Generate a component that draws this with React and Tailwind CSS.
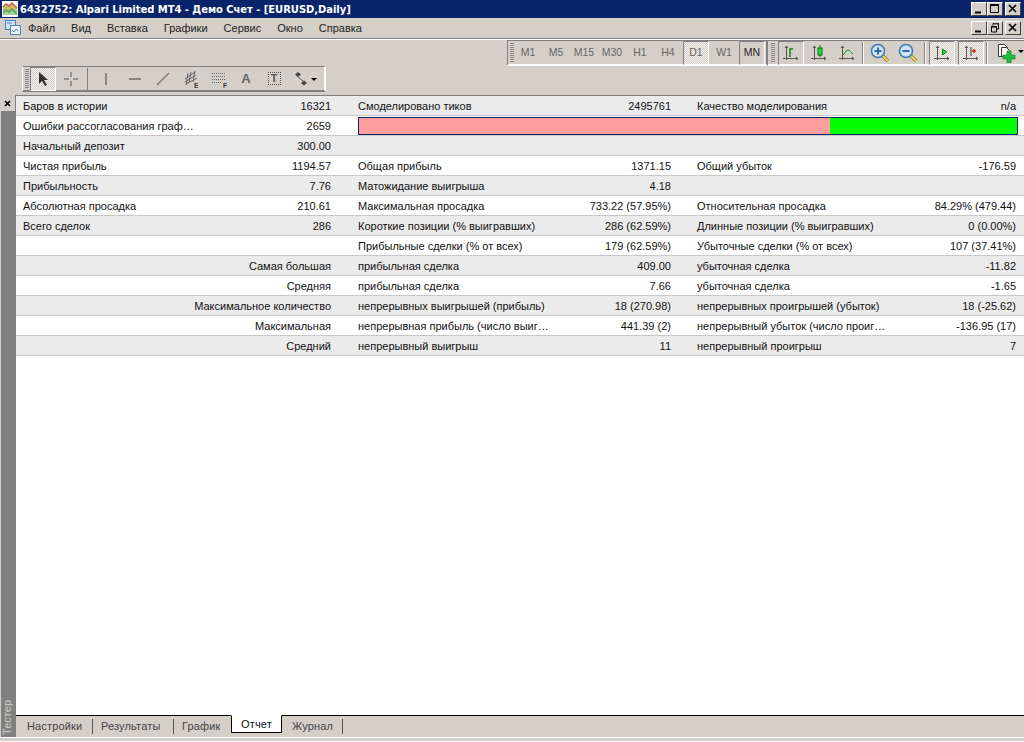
import React from "react";

const rows = [
  ["Баров в истории", "16321", "Смоделировано тиков", "2495761", "Качество моделирования", "n/a"],
  ["Ошибки рассогласования граф…", "2659", null],
  ["Начальный депозит", "300.00", "", "", "", ""],
  ["Чистая прибыль", "1194.57", "Общая прибыль", "1371.15", "Общий убыток", "-176.59"],
  ["Прибыльность", "7.76", "Матожидание выигрыша", "4.18", "", ""],
  ["Абсолютная просадка", "210.61", "Максимальная просадка", "733.22 (57.95%)", "Относительная просадка", "84.29% (479.44)"],
  ["Всего сделок", "286", "Короткие позиции (% выигравших)", "286 (62.59%)", "Длинные позиции (% выигравших)", "0 (0.00%)"],
  ["", "", "Прибыльные сделки (% от всех)", "179 (62.59%)", "Убыточные сделки (% от всех)", "107 (37.41%)"],
  ["", "Самая большая", "прибыльная сделка", "409.00", "убыточная сделка", "-11.82"],
  ["", "Средняя", "прибыльная сделка", "7.66", "убыточная сделка", "-1.65"],
  ["", "Максимальное количество", "непрерывных выигрышей (прибыль)", "18 (270.98)", "непрерывных проигрышей (убыток)", "18 (-25.62)"],
  ["", "Максимальная", "непрерывная прибыль (число выиг…", "441.39 (2)", "непрерывный убыток (число проиг…", "-136.95 (17)"],
  ["", "Средний", "непрерывный выигрыш", "11", "непрерывный проигрыш", "7"],
];

const Chart = ({ children }) => (
  <svg width="18" height="18" viewBox="0 0 18 18" fill="none">
    <path d="M4.500 2v14M1 14.500h15" stroke="#555" strokeWidth="1" />
    <path d="M3 4l1.500-2 1.500 2M14 13l2 1.500-2 1.500" stroke="#555" strokeWidth="1" />
    {children}
  </svg>
);

const Btn = ({ children, active, hatch, w = "w-[26px]" }) => (
  <div
    className={`${w} h-[24px] flex items-center justify-center shrink-0 border ${
      active ? "border-t-[#808080] border-l-[#808080] border-r-white border-b-white" : "border-transparent"
    } ${hatch ? "bg-[repeating-conic-gradient(#d4d0c8_0_25%,#f4f3f0_0_50%)] bg-[length:2px_2px]" : ""}`}
  >
    {children}
  </div>
);

const Gap = ({ className }) => <div className={`shrink-0 ${className}`} />;

const Grip = () => (
  <div className="w-[4px] h-[20px] ml-[1px] shrink-0 bg-[repeating-linear-gradient(to_bottom,#8a8a8a_0,#8a8a8a_1px,transparent_1px,transparent_2px)]" />
);
const Sep = ({ className }) => <div className={`w-[2px] h-[22px] bg-[#808080] border-r border-white shrink-0 ${className}`} />;

const TF = ({ t, active, hatch }) => (
  <Btn active={active} hatch={hatch} w="w-[26px] mx-[1px]">
    <span className={`text-[10.5px] ${active && !hatch ? "text-[#222]" : "text-[#666]"}`}>{t}</span>
  </Btn>
);

const Magnifier = ({ plus }) => (
  <svg width="20" height="20" viewBox="0 0 20 20" fill="none">
    <path d="M12 12l6 6" stroke="#8a7a20" strokeWidth="3.500" />
    <path d="M12 12l6 6" stroke="#f0d860" strokeWidth="1.800" />
    <circle cx="8" cy="8" r="6.500" fill="#cfe4f6" stroke="#3d79b8" strokeWidth="1.500" />
    <path d={plus ? "M4.500 8h7M8 4.500v7" : "M4.500 8h7"} stroke="#2f6aa8" strokeWidth="2" />
  </svg>
);

const WinBtn = ({ children }) => (
  <div className="w-[16px] h-[14px] bg-[#d4d0c8] border border-t-white border-l-white border-r-[#404040] border-b-[#404040] flex items-center justify-center shrink-0">
    {children}
  </div>
);
const Min = () => <svg width="10" height="10" viewBox="0 0 10 10"><path d="M1 7.500h6v2H1z" fill="#000" /></svg>;
const Max = () => <svg width="10" height="10" viewBox="0 0 10 10" fill="none"><path d="M0.500 1h8v7.500h-8z" stroke="#000" /><path d="M0 1h9" stroke="#000" strokeWidth="2" /></svg>;
const Rest = () => <svg width="10" height="10" viewBox="0 0 10 10" fill="none"><path d="M3 .8h6M3 .5v2M8.500 .5v5.500H7" stroke="#000" /><path d="M1 3.800h6" stroke="#000" strokeWidth="1.500" /><path d="M1.500 3.500v5.500h5v-5.500" stroke="#000" /></svg>;
const Cls = () => <svg width="10" height="10" viewBox="0 0 10 10"><path d="M1 1l7 7M8 1l-7 7" stroke="#000" strokeWidth="1.600" /></svg>;

const AppIcon = () => (
  <svg width="16" height="16" viewBox="0 0 16 16" className="shrink-0">
    <rect width="16" height="16" fill="#fff" />
    <path d="M1 6l3-3 3 2 3-3 5 5v7H1z" fill="#9fd09f" />
    <path d="M1 6l3-3 3 2 3-3 5 5" stroke="#d85a3a" strokeWidth="1.500" fill="none" />
    <path d="M1 9l3-3 3 2 3-3 5 5" stroke="#e4b040" strokeWidth="1.500" fill="none" />
    <path d="M1 12l3-3 3 2 3-3 5 5" stroke="#50a850" strokeWidth="1.500" fill="none" />
  </svg>
);
const MenuIcon = () => (
  <svg width="16" height="16" viewBox="0 0 16 16" className="shrink-0" fill="none">
    <rect x="0.500" y="0.500" width="10" height="9" fill="#cfe2f5" stroke="#4a82c0" />
    <rect x="5.500" y="5.500" width="10" height="9" fill="#eef5fc" stroke="#4a82c0" />
    <path d="M7 10l2 2 2-3 2 2" stroke="#4a82c0" />
    <path d="M2 3h5" stroke="#4a82c0" />
  </svg>
);

export default function App() {
  return (
    <div className="w-[1024px] h-[742px] overflow-hidden bg-[#d4d0c8] flex flex-col text-[11px] text-[#111] font-['Liberation_Sans',sans-serif]">
      <div className="h-[18px] bg-[#0a246a] flex items-center pl-[2px] pr-[3px] shrink-0">
        <AppIcon />
        <span className="ml-[2px] text-white font-bold text-[10px] tracking-[-0.05px] font-['DejaVu_Sans',sans-serif] whitespace-nowrap">
          6432752: Alpari Limited MT4 - Демо Счет - [EURUSD,Daily]
        </span>
        <div className="ml-auto flex">
          <WinBtn><Min /></WinBtn>
          <WinBtn><Max /></WinBtn>
          <div className="w-[2px]" />
          <WinBtn><Cls /></WinBtn>
        </div>
      </div>

      <div className="h-[21px] flex items-center pl-[5px] pr-[3px] border-b border-[#808080] shrink-0 relative">
        <MenuIcon />
        <div className="flex ml-[7px] gap-[16px] text-[11px] text-[#222]">
          {["Файл", "Вид", "Вставка", "Графики", "Сервис", "Окно", "Справка"].map((m) => (
            <span key={m}>{m}</span>
          ))}
        </div>
        <div className="ml-auto flex">
          <WinBtn><Min /></WinBtn>
          <WinBtn><Rest /></WinBtn>
          <div className="w-[2px]" />
          <WinBtn><Cls /></WinBtn>
        </div>
      </div>

      <div className="h-[27px] flex items-center justify-end shrink-0 border-t border-white">
        <div className="w-[261px] h-[26px] flex items-center border-t border-[#808080] border-b-2 border-b-white border-l border-l-[#808080] border-r-2 border-r-[#808080] pl-[1px]">
          <Grip />
          {["M1", "M5", "M15", "M30", "H1", "H4"].map((t) => <TF key={t} t={t} />)}
          <TF t="D1" active hatch />
          <TF t="W1" />
          <TF t="MN" active />
        </div>
        <div className="w-[256px] h-[26px] flex items-center border-t border-[#808080] border-b-2 border-b-white pl-[2px]">
          <Grip />
          <Gap className="w-[3px]" />
          <Btn active><Chart><path d="M8 13V5h3" stroke="#0a8a0a" strokeWidth="1.500" /></Chart></Btn>
          <Gap className="w-[2px]" />
          <Btn><Chart><rect x="8" y="4" width="4" height="7" fill="#22dd44" stroke="#0a6a0a" /><path d="M10 1v3M10 11v2" stroke="#0a6a0a" /></Chart></Btn>
          <Gap className="w-[2px]" />
          <Btn><Chart><path d="M5 11c2-2 3-5 5-5s3 3 5 4" stroke="#0a8a0a" /></Chart></Btn>
          <Sep className="ml-[2px] mr-[3px]" />
          <Btn><Magnifier plus /></Btn>
          <Gap className="w-[2px]" />
          <Btn><Magnifier /></Btn>
          <Sep className="ml-[3px] mr-[3px]" />
          <Btn active hatch><Chart><path d="M9.500 5v6l4-3z" fill="#22dd44" stroke="#0a8a0a" /></Chart></Btn>
          <Gap className="w-[3px]" />
          <Btn active hatch><Chart><path d="M9 3v9" stroke="#333" /><path d="M10 7h4M12 5v4" stroke="#d03010" strokeWidth="1.500" /></Chart></Btn>
          <Sep className="ml-[2px] mr-[9px]" />
          <svg width="30" height="20" viewBox="0 0 30 20" fill="none" className="shrink-0">
            <path d="M1.500 1.500h6l3 3v9h-9z" fill="#fff" stroke="#333" />
            <path d="M4.500 4.500h5l3 3v6h-8z" fill="#fff" stroke="#333" />
            <path d="M10 8h4v4h4v4h-4v4h-4v-4H6v-4h4z" fill="#22c03a" stroke="#0a7a1a" strokeWidth="0.600" />
            <path d="M21 7h6l-3 3z" fill="#000" />
          </svg>
        </div>
      </div>

      <div className="h-[26px] flex items-center pl-[22px] shrink-0">
        <div className="w-[304px] h-[26px] flex items-center border-t border-[#808080] border-b-2 border-b-[#808080] border-l border-l-white border-r-2 border-r-white pl-[1px]">
          <Grip />
          <Gap className="w-[1px]" />
          <Btn active hatch>
            <svg width="14" height="16" viewBox="0 0 14 16"><path d="M3 1v12l3-3 3 5 2-1-3-5h4z" fill="#333" /></svg>
          </Btn>
          <Gap className="w-[2px]" />
          <Btn>
            <svg width="16" height="16" viewBox="0 0 16 16"><path d="M8 1v5M8 10v5M1 8h5M10 8h5" stroke="#555" /></svg>
          </Btn>
          <Gap className="w-[3px]" />
          <div className="w-[1px] h-[22px] bg-[#808080] shrink-0" />
          <Gap className="w-[5px]" />
          <Btn><svg width="14" height="14" viewBox="0 0 14 14"><path d="M7 1v12" stroke="#555" strokeWidth="1.200" /></svg></Btn>
          <Gap className="w-[3px]" />
          <Btn><svg width="14" height="14" viewBox="0 0 14 14"><path d="M1 7h12" stroke="#555" strokeWidth="1.200" /></svg></Btn>
          <Gap className="w-[2px]" />
          <Btn><svg width="14" height="14" viewBox="0 0 14 14"><path d="M1 13L13 1" stroke="#777" strokeWidth="1.200" /></svg></Btn>
          <Gap className="w-[1px]" />
          <Btn>
            <svg width="18" height="18" viewBox="-2 0 18 18" fill="none">
              <path d="M2 9L12 2M2 12L13 5M3 14L14 8M5 3l-2 12M8 2L6 13M12 1l-2 11" stroke="#666" />
              <text x="11" y="17.500" fontSize="6.500" fontWeight="bold" fill="#333" fontFamily="Liberation Sans">E</text>
            </svg>
          </Btn>
          <Gap className="w-[2px]" />
          <Btn>
            <svg width="18" height="18" viewBox="-2 0 18 18" fill="none">
              <path d="M1 3.500h14M1 6.500h14M1 9.500h14M1 12.500h10" stroke="#666" strokeDasharray="1 1" />
              <text x="12" y="17.500" fontSize="6.500" fontWeight="bold" fill="#333" fontFamily="Liberation Sans">F</text>
            </svg>
          </Btn>
          <Gap className="w-[2px]" />
          <Btn><span className="text-[13px] font-bold text-[#666]">A</span></Btn>
          <Gap className="w-[2px]" />
          <Btn>
            <div className="w-[13px] h-[13px] border border-dotted border-[#555] flex items-center justify-center text-[11px] font-bold text-[#555] leading-none">T</div>
          </Btn>
          <Gap className="w-[6px]" />
          <svg width="26" height="16" viewBox="0 0 26 16" fill="none" className="shrink-0">
            <path d="M2 3.500l3-2.500 3 2.500-3 2.500z" fill="#444" /><path d="M5 6l5 4" stroke="#555" />
            <path d="M8 12l3-2.500 3 2.500-3 2.500z" fill="#444" /><path d="M18 7h6l-3 3z" fill="#000" />
          </svg>
        </div>
      </div>

      <div className="flex flex-1 min-h-0 pt-[3px]">
        <div className="w-[15px] flex flex-col items-center shrink-0">
          <div className="h-[16px] w-full flex items-center justify-center">
            <svg width="7" height="7" viewBox="0 0 7 7"><path d="M1 1l5 5M6 1l-5 5" stroke="#000" strokeWidth="1.600" /></svg>
          </div>
          <div className="w-[14px] flex-1 bg-[#808080] flex items-end justify-center">
            <span className="[writing-mode:vertical-rl] rotate-180 text-[#d4d0c8] text-[11px] pt-[2px]">Тестер</span>
          </div>
        </div>

        <div className="flex-1 flex flex-col min-w-0 border-l border-t border-[#808080]">
          <div className="flex-1 bg-white min-h-0 overflow-hidden">
            {rows.map((r, i) => (
              <div
                key={i}
                className={`h-[20px] pt-[1px] flex items-center border-b border-[#c8c8c8] ${i % 2 === 0 ? "bg-[#ebebeb]" : "bg-white"}`}
              >
                <div className="w-[315px] pl-[7px] flex justify-between whitespace-nowrap shrink-0">
                  <span>{r[0]}</span>
                  <span className="text-right">{r[1]}</span>
                </div>
                {r[2] === null ? (
                  <div className="ml-[27px] w-[660px] h-[18px] border border-[#0a246a] flex shrink-0">
                    <div className="w-[471px] bg-[#ff9f9f]" />
                    <div className="flex-1 bg-[#00ff00]" />
                  </div>
                ) : (
                  <>
                    <div className="ml-[27px] w-[313px] flex justify-between whitespace-nowrap shrink-0">
                      <span>{r[2]}</span>
                      <span>{r[3]}</span>
                    </div>
                    <div className="ml-[26px] w-[319px] flex justify-between whitespace-nowrap shrink-0">
                      <span>{r[4]}</span>
                      <span>{r[5]}</span>
                    </div>
                  </>
                )}
              </div>
            ))}
          </div>
          <div className="h-[22px] shrink-0 border-t border-black flex text-[11px] tracking-[0.15px] text-[#444]">
            <div className="h-[15px] mt-[3px] flex items-center border-r border-[#555] w-[77px] pl-[11px]">Настройки</div>
            <div className="h-[15px] mt-[3px] flex items-center border-r border-[#555] w-[81px] pl-[8px]">Результаты</div>
            <div className="h-[15px] mt-[3px] flex items-center border-r-0 w-[54px] pl-[8px]">График</div>
            <div className="w-[51px] h-[18px] -mt-[1px] bg-white border-x border-b border-black border-t border-t-white text-[#111] flex items-center justify-center ml-[3px]">Отчет</div>
            <div className="w-[61px] h-[15px] mt-[3px] pl-[10px] flex items-center border-r border-[#555]">Журнал</div>
          </div>
        </div>
      </div>
      <div className="h-[5px] shrink-0 border-t border-b border-white" />
    </div>
  );
}
